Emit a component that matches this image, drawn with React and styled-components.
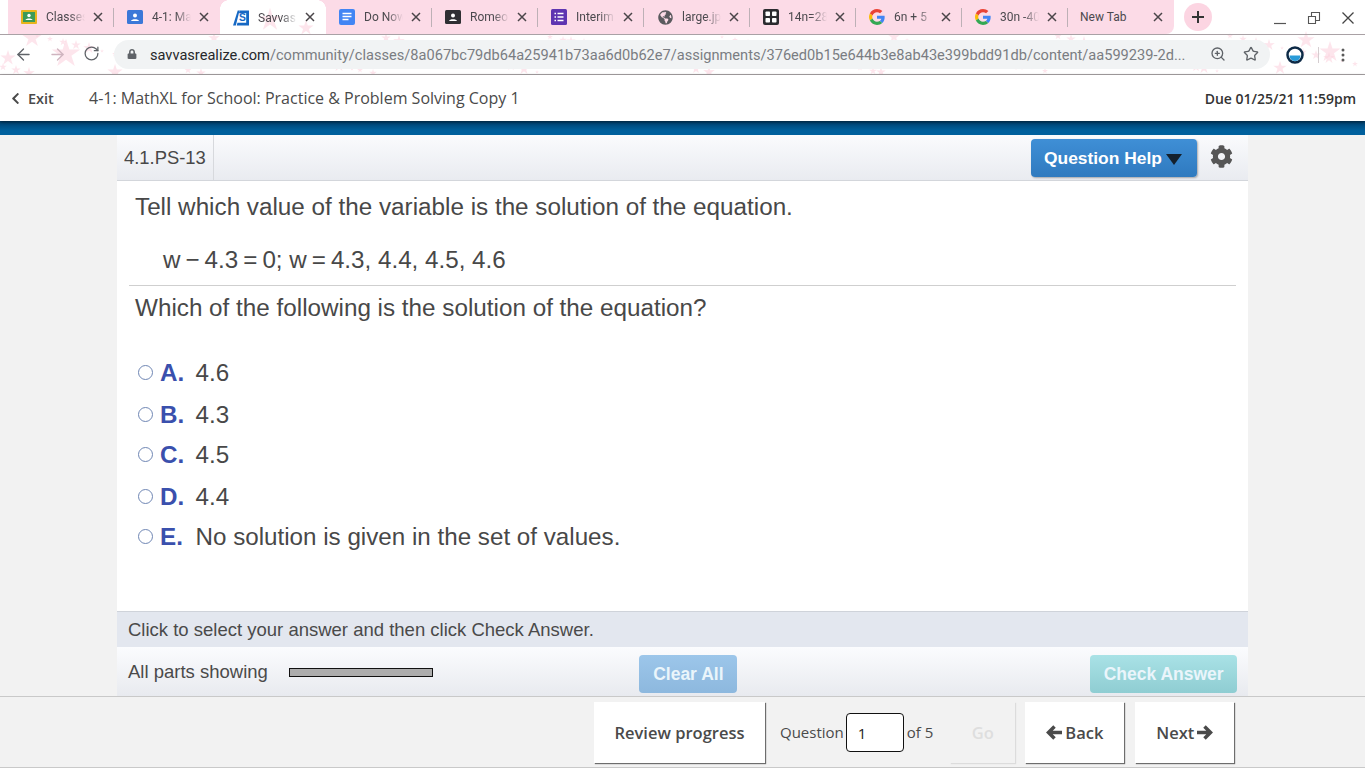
import React from 'react'
import styled, { createGlobalStyle } from 'styled-components'
import { FaCog, FaChevronLeft, FaLock, FaGlobeAmericas } from 'react-icons/fa'
import { ArrowLeft, ArrowRight, RotateCw, ZoomIn, Star } from 'lucide-react'

const PINK = '#fcdbe7'

const Global = createGlobalStyle`
  html, body { margin: 0; padding: 0; height: 100%; overflow: hidden; background: #f2f2f2; }
  * { box-sizing: border-box; }
`

const Page = styled.div`
  width: 1365px;
  height: 768px;
  display: flex;
  flex-direction: column;
  overflow: hidden;
  font-family: "Liberation Sans", Arial, sans-serif;
`

/* browser chrome */
const Chrome = styled.div`
  position: relative;
  height: 75px;
  flex: none;
  background: #fff;
`
const StarField = styled.svg`
  position: absolute;
  left: 0;
  top: 0;
  pointer-events: none;
`
const TabStrip = styled.div`
  position: relative;
  height: 35px;
  display: flex;
  align-items: flex-start;
  padding-left: 8px;
  border-bottom: 1px solid #a9a1a5;
`
const Tab = styled.div`
  position: relative;
  width: 106px;
  height: ${p => (p.$active ? '35px' : '34px')};
  flex: none;
  display: flex;
  align-items: center;
  padding-left: 13px;
  background: ${p => (p.$active ? 'transparent' : PINK)};
  border-radius: ${p => (p.$last ? '0 0 8px 0' : '0')};
  z-index: ${p => (p.$active ? 2 : 1)};
  &::before {
    content: "";
    display: ${p => (p.$active ? 'block' : 'none')};
    position: absolute;
    left: 0;
    top: 0;
    width: 100%;
    height: 9px;
    background:
      radial-gradient(circle 9px at 9px 9px, transparent 96%, ${PINK}) left top / 9px 9px no-repeat,
      radial-gradient(circle 9px at 0 9px, transparent 96%, ${PINK}) right top / 9px 9px no-repeat;
  }
  &::after {
    content: "";
    display: ${p => (p.$sep ? 'block' : 'none')};
    position: absolute;
    right: 0;
    top: 8px;
    height: 19px;
    width: 1px;
    background: #bdb0b6;
  }
`
const TabIcon = styled.span`
  position: relative;
  width: 16px;
  height: 16px;
  flex: none;
  display: ${p => (p.$empty ? 'none' : 'flex')};
  align-items: center;
  justify-content: center;
  margin-right: 9px;
`
const TabTitle = styled.span`
  position: relative;
  width: ${p => (p.$plain ? '64px' : '39px')};
  margin-left: ${p => (p.$plain ? '-1px' : '0')};
  overflow: hidden;
  white-space: nowrap;
  font: 12px Roboto, sans-serif;
  color: #4b494e;
  -webkit-mask-image: ${p => (p.$plain ? 'none' : 'linear-gradient(90deg, #000 60%, transparent 100%)')};
  mask-image: ${p => (p.$plain ? 'none' : 'linear-gradient(90deg, #000 60%, transparent 100%)')};
`
const TabClose = styled.svg`
  position: absolute;
  right: 11px;
  top: 12px;
  width: 10px;
  height: 10px;
  stroke: #4a4549;
  stroke-width: 1.5;
`
const NewTab = styled.div`
  position: relative;
  width: 28px;
  height: 28px;
  margin: 3px 0 0 10px;
  border-radius: 50%;
  background: #fcd5e2;
  display: flex;
  align-items: center;
  justify-content: center;
  flex: none;
`
const WindowButtons = styled.div`
  position: relative;
  margin-left: auto;
  display: flex;
  align-items: center;
  height: 34px;
  padding: 2px 10px 0 0;
  gap: 20px;
`
const NavStrip = styled.div`
  position: relative;
  height: 40px;
  display: flex;
  align-items: center;
  border-bottom: 1px solid #aaa5a7;
`
const NavIcon = styled.span`
  width: 34px;
  display: flex;
  justify-content: center;
  color: ${p => (p.$muted ? '#cfb4bf' : '#5f6368')};
`
const NavIcons = styled.div`
  display: flex;
  padding-left: 6px;
  width: 114px;
`
const Omnibox = styled.div`
  width: 1156px;
  height: 29px;
  margin-top: -1px;
  border-radius: 15px;
  background: #f1f3f4;
  display: flex;
  align-items: center;
  padding-left: 13px;
  font: 14.6px Roboto, sans-serif;
  color: #7a7d82;
`
const UrlHost = styled.span`
  color: #26282b;
`
const UrlText = styled.span`
  margin-left: 13px;
  width: 1042px;
  white-space: nowrap;
  overflow: hidden;
  padding-top: 1px;
`
const OmniIcons = styled.div`
  display: flex;
  align-items: center;
  gap: 17px;
  margin-left: 18px;
  color: #5f6368;
`
const NavEnd = styled.div`
  display: flex;
  align-items: center;
  margin-left: 16px;
`
const ExtensionDivider = styled.span`
  width: 1px;
  height: 16px;
  background: #d5cdd0;
  margin: 0 22px 0 14px;
`

/* activity header */
const ActivityBar = styled.header`
  position: relative;
  z-index: 2;
  height: 46px;
  flex: none;
  display: flex;
  align-items: center;
  background: #fff;
  font-family: "Open Sans", sans-serif;
  color: #4a4a4a;
  box-shadow: 0 1px 3px rgba(0, 0, 0, .5);
`
const ExitLink = styled.div`
  display: flex;
  align-items: center;
  gap: 6px;
  width: 89px;
  padding-left: 9px;
  font-size: 14.500px;
  font-weight: 600;
  svg { font-size: 13px; }
`
const AssignmentTitle = styled.div`
  font-size: 16px;
`
const DueDate = styled.div`
  margin-left: auto;
  padding-right: 9px;
  font-size: 14px;
  font-weight: 600;
  color: #333;
`
const BlueBand = styled.div`
  height: 14px;
  flex: none;
  background: linear-gradient(#003f6c, #00609d 70%);
  box-shadow: 0 1px 2px rgba(120, 90, 60, .5);
`

/* question panel */
const Main = styled.main`
  flex: 1;
  min-height: 0;
  padding: 0 117px;
  background: #f2f2f2;
`
const Panel = styled.section`
  height: 100%;
  display: flex;
  flex-direction: column;
  background: #fff;
`
const PanelTop = styled.div`
  height: 46px;
  flex: none;
  display: flex;
  align-items: stretch;
  background: linear-gradient(#fafbfd, #e9ebf0);
  border-bottom: 1px solid #d3d6db;
`
const QuestionId = styled.div`
  width: 97px;
  display: flex;
  align-items: center;
  padding-left: 7px;
  font-size: 18.400px;
  color: #484848;
  border-right: 1px solid #d7d9dd;
`
const HelpButton = styled.button`
  margin: 4px 0 0 auto;
  width: 166px;
  height: 38px;
  display: flex;
  align-items: center;
  gap: 4px;
  padding: 0 0 0 13px;
  border: 0;
  border-radius: 4px;
  background: linear-gradient(#3f8fd6, #2f7abf);
  box-shadow: 1px 1px 2px rgba(0, 0, 0, .3);
  font: bold 17.400px "Liberation Sans", Arial, sans-serif;
  color: #fff;
`
const Caret = styled.span`
  width: 0;
  height: 0;
  border-left: 8px solid transparent;
  border-right: 8px solid transparent;
  border-top: 11px solid #14202c;
  margin-top: 2px;
`
const Gear = styled.div`
  width: 51px;
  padding: 10px 0 0 13px;
  font-size: 23px;
  color: #565656;
`
const QuestionBody = styled.div`
  flex: 1;
  min-height: 0;
  padding: 11px 12px 0;
  color: #484848;
`
const Prompt = styled.p`
  margin: 0;
  padding-left: 6px;
  font-size: 24.250px;
  line-height: 30px;
`
const Equation = styled.div`
  margin: 23px 0 7px;
  padding-left: 34px;
  height: 41px;
  border-bottom: 1px solid #cfcfcf;
  font-size: 24.200px;
  line-height: 30px;
`
const Op = styled.span`
  margin: 0 5px;
`
const Choices = styled.ul`
  list-style: none;
  margin: 29px 0 0;
  padding: 0 0 0 9px;
`
const Choice = styled.li`
  height: 41px;
  display: flex;
  align-items: center;
  font-size: 24.200px;
  &:nth-child(even) { padding-top: 2px; }
`
const Radio = styled.span`
  width: 15px;
  height: 15px;
  flex: none;
  border-radius: 50%;
  border: 1.700px solid #6f86b4;
  background: #fff;
  margin-right: 7px;
`
const ChoiceLetter = styled.b`
  width: 35.500px;
  color: #3a50ad;
`
const InstructionBar = styled.div`
  height: 36px;
  flex: none;
  display: flex;
  align-items: center;
  padding-left: 11px;
  background: #e3e7ef;
  border-top: 1px solid #cfd3da;
  font-size: 18.500px;
  color: #4a4a4a;
`
const ActionBar = styled.div`
  height: 49px;
  flex: none;
  display: flex;
  align-items: center;
  padding: 0 11px;
  background: linear-gradient(#fbfcfe, #e8eaef);
  font-size: 18.500px;
  color: #4a4a4a;
`
const PartsLabel = styled.span`
  width: 161px;
  margin-top: 1px;
`
const PartsBar = styled.span`
  width: 145px;
  height: 9px;
  margin-top: 1px;
  background: #adadad;
  border: 1px solid #111;
`
const ActionButton = styled.button`
  height: 38px;
  margin-top: 5px;
  margin-left: ${p => p.$left};
  width: ${p => p.$width};
  border: 0;
  border-radius: 4px;
  background: ${p => (p.$teal ? 'linear-gradient(#a9e2e6, #8fcdd2)' : 'linear-gradient(#9cc6ea, #8db8de)')};
  font: bold 17.500px "Liberation Sans", Arial, sans-serif;
  color: #eaf5fb;
`

/* bottom navigation */
const Footer = styled.footer`
  height: 72px;
  flex: none;
  display: flex;
  align-items: center;
  padding-left: 594px;
  background: #f2f2f2;
  border-top: 1px solid #c9c9c9;
  border-bottom: 1px solid #c9c9c9;
  font-family: "Open Sans", sans-serif;
  color: #4a4a4a;
`
const FootButton = styled.div`
  height: 61px;
  width: ${p => p.$width};
  margin-left: ${p => p.$left || '0'};
  display: flex;
  align-items: center;
  justify-content: center;
  gap: 3px;
  background: ${p => (p.$disabled ? '#f2f2f2' : '#fff')};
  color: ${p => (p.$disabled ? '#dedede' : '#4a4a4a')};
  font-size: 16.500px;
  font-weight: 600;
  box-shadow: ${p => (p.$disabled ? '1px 1px 1px #dcdcdc' : '1px 1px 1px #6d6d6d')};
`
const QuestionLabel = styled.span`
  font-size: 15px;
  margin-left: ${p => p.$left || '0'};
`
const QuestionInput = styled.input`
  width: 58px;
  height: 39px;
  margin: 0 3px 0 2px;
  padding: 2px 0 0 11px;
  border: 1px solid #111;
  border-radius: 4px;
  background: #fff;
  font: 15px "Open Sans", sans-serif;
  color: #222;
`
const HeavyArrow = styled.svg`
  width: 16px;
  height: 15px;
  fill: none;
  stroke: #4a4a4a;
  stroke-width: 3.500;
  transform: ${p => (p.$right ? 'scaleX(-1)' : 'none')};
`

const tabs = [
  { title: 'Classes', icon: 'classroom', sep: true },
  { title: '4-1: MathXL', icon: 'person' },
  { title: 'Savvas Realize', icon: 'savvas', active: true },
  { title: 'Do Now', icon: 'docs', sep: true },
  { title: 'Romeo', icon: 'contact', sep: true },
  { title: 'Interim', icon: 'forms', sep: true },
  { title: 'large.jpg', icon: 'globe', sep: true },
  { title: '14n=28', icon: 'grid', sep: true },
  { title: '6n + 5', icon: 'google', sep: true },
  { title: '30n -40', icon: 'google', sep: true },
  { title: 'New Tab', plain: true, last: true },
]

const choices = [
  ['A.', '4.6'],
  ['B.', '4.3'],
  ['C.', '4.5'],
  ['D.', '4.4'],
  ['E.', 'No solution is given in the set of values.'],
]

function Favicon({ type }) {
  switch (type) {
    case 'classroom':
      return (
        <svg width="16" height="16" viewBox="0 0 16 16">
          <rect width="16" height="14" y="1" rx="1" fill="#e8b51c" />
          <rect x="2" y="3" width="12" height="10" fill="#3c9a58" />
          <circle cx="8" cy="6.500" r="1.700" fill="#fff" />
          <path d="M4.500 11c.5-2 6.500-2 7 0z" fill="#fff" />
        </svg>
      )
    case 'person':
      return (
        <svg width="16" height="16" viewBox="0 0 16 16">
          <rect y="1" width="16" height="14" rx="1.500" fill="#3b78d8" />
          <circle cx="8" cy="6.500" r="2" fill="#fff" />
          <path d="M4 12c.5-2.500 7.500-2.500 8 0z" fill="#fff" />
        </svg>
      )
    case 'savvas':
      return (
        <svg width="17" height="16" viewBox="0 0 17 16">
          <path d="M5 0h2L3 16H0z" fill="#1668c4" />
          <path d="M7 0h10v16H4l.7-3H14V3H6.300z" fill="#1668c4" />
          <text x="6.500" y="11.500" fontSize="11" fontWeight="700" fontFamily="Liberation Sans" fill="#1668c4">S</text>
        </svg>
      )
    case 'docs':
      return (
        <svg width="16" height="16" viewBox="0 0 16 16">
          <rect width="16" height="16" rx="2" fill="#4285f4" />
          <path d="M3.500 4.500h9M3.500 7.500h9M3.500 10.500h6" stroke="#fff" strokeWidth="1.400" />
        </svg>
      )
    case 'contact':
      return (
        <svg width="16" height="16" viewBox="0 0 16 16">
          <rect y="1" width="16" height="14" rx="1.500" fill="#2f2f33" />
          <circle cx="8" cy="6.500" r="2" fill="#fff" />
          <path d="M4 12c.5-2.500 7.500-2.500 8 0z" fill="#fff" />
        </svg>
      )
    case 'forms':
      return (
        <svg width="16" height="16" viewBox="0 0 16 16">
          <rect width="16" height="16" rx="1.500" fill="#5e35b1" />
          <path d="M6.500 4.500h6M6.500 8h6M6.500 11.500h6M3.500 4.500h1.500M3.500 8h1.500M3.500 11.500h1.500" stroke="#fff" strokeWidth="1.300" />
        </svg>
      )
    case 'globe':
      return <FaGlobeAmericas size={15} color="#5a5a5e" />
    case 'grid':
      return (
        <svg width="16" height="16" viewBox="0 0 16 16">
          <rect width="16" height="16" rx="2" fill="#2b2b2f" />
          <rect x="2.500" y="2.500" width="4.500" height="4.500" rx=".8" fill="#fff" />
          <rect x="9" y="2.500" width="4.500" height="4.500" rx=".8" fill="#fff" />
          <rect x="2.500" y="9" width="4.500" height="4.500" rx=".8" fill="#fff" />
          <rect x="9" y="9" width="4.500" height="4.500" rx=".8" fill="#fff" />
        </svg>
      )
    case 'google':
      return (
        <svg width="16" height="16" viewBox="0 0 48 48">
          <path fill="#EA4335" d="M24 9.500c3.500 0 6.700 1.200 9.200 3.600l6.900-6.900C35.900 2.400 30.500 0 24 0 14.600 0 6.500 5.400 2.600 13.200l8 6.200C12.500 13.700 17.800 9.500 24 9.500z" />
          <path fill="#4285F4" d="M47 24.500c0-1.600-.1-3.100-.4-4.500H24v9h13c-.6 3-2.200 5.500-4.800 7.200l7.700 6C44.400 38 47 31.800 47 24.500z" />
          <path fill="#FBBC05" d="M10.500 28.600c-.5-1.500-.8-3-.8-4.600s.3-3.200.8-4.600l-8-6.200C1 16.500 0 20.100 0 24s1 7.500 2.600 10.800l7.900-6.200z" />
          <path fill="#34A853" d="M24 48c6.500 0 11.900-2.100 15.900-5.800l-7.700-6c-2.200 1.400-4.900 2.300-8.200 2.300-6.200 0-11.500-4.200-13.400-9.900l-8 6.200C6.500 42.600 14.600 48 24 48z" />
        </svg>
      )
    default:
      return null
  }
}

// loose scatter of faint stars behind the browser toolbar
const starSpots = Array.from({ length: 110 }, (_, i) => ({
  x: (i * 211 + 37) % 1365,
  y: 36 + ((i * 47) % 38),
  r: 2 + ((i * 7) % 5),
}))
starSpots.push(
  { x: 66, y: 54, r: 15 },
  { x: 32, y: 38, r: 10 },
  { x: 8, y: 58, r: 8 },
  { x: 115, y: 72, r: 8 },
  { x: 270, y: 20, r: 12 },
  { x: 306, y: 28, r: 8 },
  { x: 1306, y: 40, r: 9 },
  { x: 1330, y: 52, r: 11 },
  { x: 1280, y: 68, r: 7 },
)

function starPoints(x, y, r) {
  const pts = []
  for (let i = 0; i < 10; i++) {
    const rad = i % 2 ? r * 0.38 : r
    const a = (Math.PI / 5) * i - Math.PI / 2
    pts.push(`${(x + rad * Math.cos(a)).toFixed(1)},${(y + rad * Math.sin(a)).toFixed(1)}`)
  }
  return pts.join(' ')
}

function ChromeBar() {
  return (
    <Chrome>
      <StarField width="1365" height="75" viewBox="0 0 1365 75">
        {starSpots.map((s, i) => (
          <polygon key={i} points={starPoints(s.x, s.y, s.r)} fill="#fbd3e0" opacity="0.6" />
        ))}
      </StarField>
      <TabStrip>
        {tabs.map((t, i) => (
          <Tab key={i} $active={t.active} $sep={t.sep} $last={t.last}>
            <TabIcon $empty={!t.icon}><Favicon type={t.icon} /></TabIcon>
            <TabTitle $plain={t.plain}>{t.title}</TabTitle>
            <TabClose viewBox="0 0 10 10"><path d="M1 1l8 8M9 1l-8 8" /></TabClose>
          </Tab>
        ))}
        <NewTab>
          <svg width="14" height="14" viewBox="0 0 14 14"><path d="M7 1v12M1 7h12" stroke="#333" strokeWidth="2" /></svg>
        </NewTab>
        <WindowButtons>
          <svg width="14" height="14" viewBox="0 0 14 14"><path d="M1 12.500h12" stroke="#555" strokeWidth="1.200" /></svg>
          <svg width="14" height="14" viewBox="0 0 14 14" fill="none" stroke="#555" strokeWidth="1.100"><path d="M1.500 5.500h7v7h-7zM4.500 5V1.500h8v8H9" /></svg>
          <svg width="14" height="14" viewBox="0 0 14 14"><path d="M1.500 1.500l11 11M12.500 1.500l-11 11" stroke="#444" strokeWidth="1.300" /></svg>
        </WindowButtons>
      </TabStrip>
      <NavStrip>
        <NavIcons>
          <NavIcon><ArrowLeft size={19} strokeWidth={1.7} /></NavIcon>
          <NavIcon $muted><ArrowRight size={19} strokeWidth={1.7} /></NavIcon>
          <NavIcon><RotateCw size={17} strokeWidth={1.8} /></NavIcon>
        </NavIcons>
        <Omnibox>
          <FaLock size={10} color="#5f6368" />
          <UrlText>
            <UrlHost>savvasrealize.com</UrlHost>/community/classes/8a067bc79db64a25941b73aa6d0b62e7/assignments/376ed0b15e644b3e8ab43e399bdd91db/content/aa599239-2d...
          </UrlText>
          <OmniIcons>
            <ZoomIn size={16} />
            <Star size={16} />
          </OmniIcons>
        </Omnibox>
        <NavEnd>
          <svg width="18" height="18" viewBox="0 0 18 18">
            <circle cx="9" cy="9" r="7.500" fill="#fff" stroke="#0d2a46" strokeWidth="2.500" />
            <path d="M3.500 9.500h11a5.500 5.500 0 0 1-11 0z" fill="#2a9bd8" />
          </svg>
          <ExtensionDivider />
          <svg width="4" height="14" viewBox="0 0 4 14" fill="#5a5a5a">
            <circle cx="2" cy="2" r="1.500" /><circle cx="2" cy="7" r="1.500" /><circle cx="2" cy="12" r="1.500" />
          </svg>
        </NavEnd>
      </NavStrip>
    </Chrome>
  )
}

function BackArrow({ right }) {
  return (
    <HeavyArrow $right={right} viewBox="0 0 16 15">
      <path d="M8.500 1.500L2.500 7.500l6 6M3 7.500h13" />
    </HeavyArrow>
  )
}

export default function App() {
  return (
    <Page>
      <Global />
      <ChromeBar />
      <ActivityBar>
        <ExitLink><FaChevronLeft /> Exit</ExitLink>
        <AssignmentTitle>4-1: MathXL for School: Practice &amp; Problem Solving Copy 1</AssignmentTitle>
        <DueDate>Due 01/25/21 11:59pm</DueDate>
      </ActivityBar>
      <BlueBand />
      <Main>
        <Panel>
          <PanelTop>
            <QuestionId>4.1.PS-13</QuestionId>
            <HelpButton>Question Help <Caret /></HelpButton>
            <Gear><FaCog /></Gear>
          </PanelTop>
          <QuestionBody>
            <Prompt>Tell which value of the variable is the solution of the equation.</Prompt>
            <Equation>
              w<Op>−</Op>4.3<Op>=</Op>0; w<Op>=</Op>4.3, 4.4, 4.5, 4.6
            </Equation>
            <Prompt>Which of the following is the solution of the equation?</Prompt>
            <Choices>
              {choices.map(([letter, text]) => (
                <Choice key={letter}>
                  <Radio />
                  <ChoiceLetter>{letter}</ChoiceLetter>
                  <span>{text}</span>
                </Choice>
              ))}
            </Choices>
          </QuestionBody>
          <InstructionBar>Click to select your answer and then click Check Answer.</InstructionBar>
          <ActionBar>
            <PartsLabel>All parts showing</PartsLabel>
            <PartsBar />
            <ActionButton $left="206px" $width="98px">Clear All</ActionButton>
            <ActionButton $teal $left="353px" $width="147px">Check Answer</ActionButton>
          </ActionBar>
        </Panel>
      </Main>
      <Footer>
        <FootButton $width="171px">Review progress</FootButton>
        <QuestionLabel $left="15px">Question</QuestionLabel>
        <QuestionInput defaultValue="1" />
        <QuestionLabel>of 5</QuestionLabel>
        <FootButton $width="65px" $left="17px" $disabled>Go</FootButton>
        <FootButton $width="99px" $left="10px"><BackArrow /> Back</FootButton>
        <FootButton $width="99px" $left="11px">Next <BackArrow right /></FootButton>
      </Footer>
    </Page>
  )
}
